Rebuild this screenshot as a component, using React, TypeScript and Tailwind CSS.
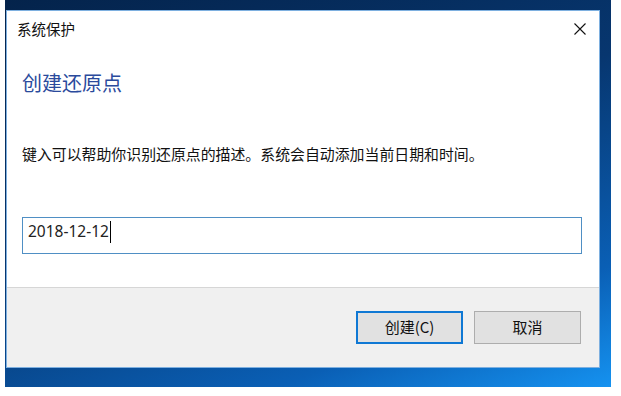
import React from "react";

const cjk = { fontFamily: '"Noto Sans CJK SC", "Noto Sans", sans-serif' };

function CloseIcon() {
  return (
    <svg width="14" height="14" viewBox="0 0 14 14" className="block">
      <path d="M1.5 1.5 L12.5 12.5 M12.5 1.5 L1.5 12.5" stroke="#111" strokeWidth="1.1" fill="none" />
    </svg>
  );
}

export default function App() {
  return (
    <div className="w-[621px] h-[396px] bg-white overflow-hidden" style={cjk}>
      <div className="ml-[5px] w-[606px] h-[387px] pt-[10px] pl-[1px] bg-[linear-gradient(160deg,#04234b_0%,#07366f_45%,#0a5fb5_80%,#1592f0_100%)]">
        <div className="w-[594px] h-[358px] border border-[#7eb0e0] bg-white flex flex-col">
          {/* title bar */}
          <div className="h-[36px] shrink-0 flex items-center justify-between pl-[10px] pr-[12px]">
            <span className="text-[14.5px] leading-[20px] text-[#111]">系统保护</span>
            <CloseIcon />
          </div>

          {/* body */}
          <div className="h-[240px] shrink-0 pl-[15px] pr-[16px]">
            <div className="mt-[24px] text-[20px] leading-[24px] text-[#2a4a9c]">创建还原点</div>
            <div className="mt-[49px] text-[14.9px] leading-[20px] text-[#111]">
              键入可以帮助你识别还原点的描述。系统会自动添加当前日期和时间。
            </div>
            <div className="mt-[53px] w-[560px] h-[37px] border border-[#4f8fc4] pl-[5px] pt-[2px] flex items-start">
              <span
                className="text-[15.5px] leading-[22px] text-[#222]"
                style={{ fontFamily: '"Noto Sans", "Open Sans", sans-serif' }}
              >
                2018-12-12
              </span>
              <span className="ml-px mt-px w-px h-[22px] bg-black" />
            </div>
          </div>

          {/* footer */}
          <div className="h-[80px] shrink-0 border-t border-[#d6d6d6] bg-[#f0f0f0] flex justify-end items-start pt-[23px] pr-[18px] gap-[11px]">
            <button className="w-[107px] h-[33px] border-2 border-[#0f78d4] bg-[#e1e1e1] text-[15px] text-[#111] flex items-center justify-center">
              创建(C)
            </button>
            <button className="w-[107px] h-[33px] border border-[#adadad] bg-[#e1e1e1] text-[15px] text-[#111] flex items-center justify-center">
              取消
            </button>
          </div>
        </div>
      </div>
    </div>
  );
}
